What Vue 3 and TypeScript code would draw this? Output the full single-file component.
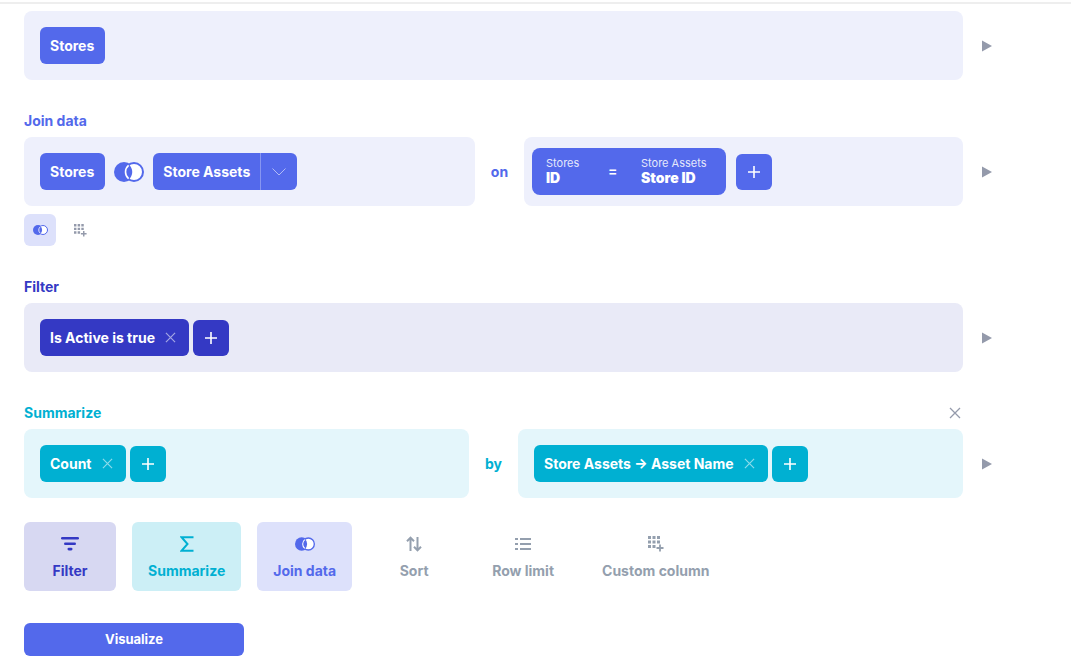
<script setup lang="ts">
const tools = [
  { label: 'Filter', icon: 'i-filter', kind: 'filter' },
  { label: 'Summarize', icon: 'i-sigma', kind: 'summarize' },
  { label: 'Join data', icon: 'i-join', kind: 'join' },
  { label: 'Sort', icon: 'i-sort', kind: 'plain' },
  { label: 'Row limit', icon: 'i-list', kind: 'plain' },
  { label: 'Custom column', icon: 'i-custom', kind: 'plain' },
]
</script>

<template>
  <svg class="defs" aria-hidden="true">
    <symbol id="i-join" viewBox="0 0 30 20">
      <circle cx="10" cy="10" r="10" fill="currentColor" />
      <circle cx="20" cy="10" r="8.6" fill="#fff" />
      <path d="M14.5 2.2a10 10 0 0 1 0 15.6a8.6 8.6 0 0 1 0-15.6z" fill="currentColor" />
      <circle cx="20" cy="10" r="9" fill="none" stroke="currentColor" stroke-width="2" />
      <path d="M14.6 3.4a8.6 8.6 0 0 0 0 13.2" fill="none" stroke="#fff" stroke-width="1.6" />
    </symbol>
    <symbol id="i-filter" viewBox="0 0 18 14">
      <rect x="0" y="0" width="18" height="2.6" rx="1.3" fill="currentColor" />
      <rect x="3" y="5.4" width="12" height="2.6" rx="1.3" fill="currentColor" />
      <rect x="6.5" y="10.8" width="5" height="2.6" rx="1.3" fill="currentColor" />
    </symbol>
    <symbol id="i-sigma" viewBox="0 0 14 16">
      <path d="M13.5 1.2H1.5L7.5 8L1.5 14.8H13.5" fill="none" stroke="currentColor" stroke-width="2" />
    </symbol>
    <symbol id="i-sort" viewBox="0 0 16 16">
      <path d="M4.5 15V2M1 5.2L4.5 1.6L8 5.2M11.5 1V14M8 10.8L11.5 14.4L15 10.8" fill="none" stroke="currentColor" stroke-width="2" />
    </symbol>
    <symbol id="i-list" viewBox="0 0 16 14">
      <path d="M5 2H16M5 7H16M5 12H16" fill="none" stroke="currentColor" stroke-width="2" />
      <path d="M0 1h3v2H0zM0 6h3v2H0zM0 11h3v2H0z" fill="currentColor" />
    </symbol>
    <symbol id="i-custom" viewBox="0 0 16 16">
      <path d="M0 0h3v3H0zM4.5 0h3v3h-3zM9 0h3v3H9zM0 4.5h3v3H0zM4.5 4.5h3v3h-3zM9 4.5h3v3H9zM0 9h3v3H0zM4.5 9h3v3h-3z" fill="currentColor" />
      <path d="M12 8.5v7M8.5 12h7" fill="none" stroke="currentColor" stroke-width="1.8" />
    </symbol>
    <symbol id="i-plus" viewBox="0 0 14 14">
      <path d="M7 1V13M1 7H13" fill="none" stroke="currentColor" stroke-width="1.6" />
    </symbol>
    <symbol id="i-close" viewBox="0 0 12 12">
      <path d="M1 1L11 11M11 1L1 11" fill="none" stroke="currentColor" stroke-width="1.3" />
    </symbol>
    <symbol id="i-arrow" viewBox="0 0 10 12">
      <path d="M0 0.5L10 6L0 11.5Z" fill="currentColor" />
    </symbol>
  </svg>

  <div class="page">
    <section class="step brand first">
      <div class="row">
        <div class="panels">
          <div class="panel grow"><span class="chip">Stores</span></div>
        </div>
        <svg class="arrow"><use href="#i-arrow" /></svg>
      </div>
    </section>

    <section class="step brand">
      <div class="title">Join data</div>
      <div class="row">
        <div class="panels">
          <div class="panel left-join">
            <span class="chip">Stores</span>
            <svg class="join-icon"><use href="#i-join" /></svg>
            <span class="chip split">
              <span class="split-label">Store Assets</span>
              <span class="split-caret">
                <svg width="14" height="8" viewBox="0 0 14 8"><path d="M0.5 0.5L7 7L13.5 0.5" fill="none" stroke="currentColor" stroke-width="1" /></svg>
              </span>
            </span>
          </div>
          <span class="word">on</span>
          <div class="panel grow cond-panel">
            <div class="condition">
              <div class="cond-col cond-a"><small>Stores</small><strong>ID</strong></div>
              <span class="eq">=</span>
              <div class="cond-col"><small>Store Assets</small><strong>Store ID</strong></div>
            </div>
            <button class="add"><svg><use href="#i-plus" /></svg></button>
          </div>
        </div>
        <svg class="arrow"><use href="#i-arrow" /></svg>
      </div>
      <div class="extras">
        <span class="extra active"><svg class="mini-join"><use href="#i-join" /></svg></span>
        <span class="extra"><svg class="mini-custom"><use href="#i-custom" /></svg></span>
      </div>
    </section>

    <section class="step indigo">
      <div class="title">Filter</div>
      <div class="row">
        <div class="panels">
          <div class="panel grow chips">
            <span class="chip">Is Active is true<svg class="x"><use href="#i-close" /></svg></span>
            <button class="add"><svg><use href="#i-plus" /></svg></button>
          </div>
        </div>
        <svg class="arrow"><use href="#i-arrow" /></svg>
      </div>
    </section>

    <section class="step teal">
      <div class="title spread">
        Summarize
        <svg class="title-x"><use href="#i-close" /></svg>
      </div>
      <div class="row">
        <div class="panels">
          <div class="panel chips left-sum">
            <span class="chip">Count<svg class="x"><use href="#i-close" /></svg></span>
            <button class="add"><svg><use href="#i-plus" /></svg></button>
          </div>
          <span class="word">by</span>
          <div class="panel grow chips">
            <span class="chip">Store Assets → Asset Name<svg class="x"><use href="#i-close" /></svg></span>
            <button class="add"><svg><use href="#i-plus" /></svg></button>
          </div>
        </div>
        <svg class="arrow"><use href="#i-arrow" /></svg>
      </div>
    </section>

    <div class="tools">
      <button v-for="t in tools" :key="t.label" class="tool" :class="t.kind">
        <span class="tool-icon"><svg :class="t.icon"><use :href="'#' + t.icon" /></svg></span>
        {{ t.label }}
      </button>
    </div>

    <button class="visualize">Visualize</button>
  </div>
</template>

<style>
body {
  background: #fff;
}
</style>

<style scoped>
.defs {
  display: none;
}

.page {
  height: 668px;
  box-sizing: border-box;
  border-top: 2px solid #eeeeee;
  margin-top: 2px;
  padding: 7px 0 0 24px;
  font-family: Inter, "Liberation Sans", sans-serif;
  font-weight: 700;
  font-size: 14px;
  overflow: hidden;
}

.brand { --c: #5369eb; --bg: #eef0fc; }
.indigo { --c: #3439c4; --bg: #e9eaf7; }
.teal { --c: #00b0d2; --bg: #e4f6fb; }

.step {
  margin-bottom: 33px;
}

.step.teal {
  margin-bottom: 24px;
}

.title {
  width: 939px;
  height: 16px;
  line-height: 16px;
  margin-bottom: 8px;
  color: var(--c);
}

.spread {
  display: flex;
  justify-content: space-between;
  align-items: center;
}

.title-x {
  width: 12px;
  height: 12px;
  margin-right: 2px;
  color: #949aab;
}

.row {
  display: flex;
  align-items: center;
}

.panels {
  width: 939px;
  display: flex;
  align-items: center;
}

.arrow {
  width: 10px;
  height: 12px;
  margin-left: 19px;
  color: #949aab;
}

.panel {
  height: 69px;
  box-sizing: border-box;
  padding: 0 16px;
  border-radius: 8px;
  background: var(--bg);
  display: flex;
  align-items: center;
}

.grow {
  flex: 1;
}

.chips {
  gap: 4px;
}

.left-join {
  width: 451px;
}

.left-sum {
  width: 445px;
}

.word {
  width: 49px;
  text-align: center;
  color: var(--c);
}

.chip {
  height: 37px;
  padding: 0 11px 0 10px;
  border-radius: 6px;
  background: var(--c);
  color: #fff;
  display: inline-flex;
  align-items: center;
  white-space: nowrap;
}

.x {
  width: 11px;
  height: 11px;
  margin-left: 10px;
  margin-right: 2px;
  color: #fff;
  opacity: 0.55;
}

.join-icon {
  width: 30px;
  height: 20px;
  margin: 0 9px;
  color: var(--c);
}

.split {
  padding: 0;
}

.split-label {
  padding: 0 10px;
  line-height: 37px;
}

.split-caret {
  width: 36px;
  height: 37px;
  border-left: 1px solid rgba(255, 255, 255, 0.3);
  display: flex;
  align-items: center;
  justify-content: center;
  color: rgba(255, 255, 255, 0.55);
}

.cond-panel {
  padding-left: 8px;
  gap: 10px;
}

.condition {
  width: 194px;
  height: 47px;
  box-sizing: border-box;
  padding: 0 14px 2px;
  border-radius: 8px;
  background: var(--c);
  color: #fff;
  display: flex;
  align-items: center;
}

.cond-col {
  display: flex;
  flex-direction: column;
}

.cond-a {
  width: 62px;
}

.cond-col small {
  font-size: 11px;
  font-weight: 400;
  line-height: 14px;
  white-space: nowrap;
  opacity: 0.85;
}

.cond-col strong {
  line-height: 16px;
  white-space: nowrap;
}

.eq {
  width: 33px;
  font-weight: 600;
}

.add {
  width: 36px;
  height: 36px;
  padding: 0;
  border: 0;
  border-radius: 6px;
  background: var(--c);
  color: #fff;
  display: flex;
  align-items: center;
  justify-content: center;
}

.add svg {
  width: 14px;
  height: 14px;
}

.extras {
  display: flex;
  gap: 8px;
  margin-top: 8px;
}

.extra {
  width: 32px;
  height: 32px;
  border-radius: 6px;
  display: flex;
  align-items: center;
  justify-content: center;
  color: #949aab;
}

.extra.active {
  background: #dde1fb;
  color: var(--c);
}

.mini-join {
  width: 15px;
  height: 10px;
}

.mini-custom {
  width: 13px;
  height: 13px;
}

.tools {
  display: flex;
  gap: 16px;
}

.tool {
  min-width: 92px;
  height: 69px;
  padding: 0 16px;
  border: 0;
  border-radius: 6px;
  background: transparent;
  color: #949fae;
  font: inherit;
  display: flex;
  flex-direction: column;
  align-items: center;
}

.tool-icon {
  height: 23px;
  margin: 10px 0 7px;
  display: flex;
  align-items: center;
  justify-content: center;
}

.tool.filter { background: #d7d8f2; color: #3439c4; }
.tool.summarize { background: #cceff6; color: #00b0d2; }
.tool.join { background: #dde1fb; color: #5369eb; }

.i-filter { width: 18px; height: 14px; }
.i-sigma { width: 14px; height: 16px; }
.i-join { width: 20px; height: 14px; }
.i-sort { width: 16px; height: 16px; }
.i-list { width: 16px; height: 14px; }
.i-custom { width: 16px; height: 16px; }

.visualize {
  display: block;
  width: 220px;
  height: 33px;
  margin-top: 32px;
  padding: 0 0 2px;
  border: 0;
  border-radius: 6px;
  background: #5369eb;
  color: #fff;
  font: inherit;
  font-size: 13px;
}
</style>
